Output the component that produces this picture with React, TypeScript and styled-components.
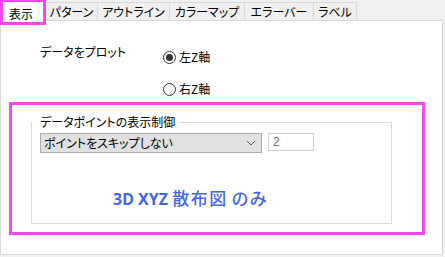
import React from "react";
import styled, { createGlobalStyle } from "styled-components";

const Global = createGlobalStyle`
  html, body { margin: 0; padding: 0; background: #f0f0f0; }
  body {
    font-family: "Noto Sans CJK JP", "Noto Sans", sans-serif;
    font-size: 12px;
    color: #000;
    font-feature-settings: "palt";
  }
`;

const MAGENTA = "#f945f2";

const Window = styled.div`
  width: 445px;
  height: 257px;
  background: #f0f0f0;
  display: flex;
  flex-direction: column;
  overflow: hidden;
`;

const TabStrip = styled.div`
  height: 20px;
  display: flex;
  align-items: flex-end;
  position: relative;
  z-index: 2;
`;

const Tab = styled.div<{ $w: number }>`
  width: ${(p) => p.$w}px;
  height: 18px;
  box-sizing: border-box;
  border: 1px solid #d9d9d9;
  border-bottom: none;
  margin-left: -1px;
  background: #f0f0f0;
  display: flex;
  align-items: center;
  justify-content: center;
  line-height: 16px;
  white-space: nowrap;
`;

const ActiveTab = styled.div<{ $w: number }>`
  width: ${(p) => p.$w}px;
  height: 26px;
  margin-bottom: -5px;
  box-sizing: border-box;
  border: 3px solid ${MAGENTA};
  background: #fff;
  display: flex;
  align-items: flex-start;
  padding: 4px 0 0 6px;
  line-height: 16px;
  position: relative;
  z-index: 3;
`;

const Panel = styled.div`
  width: 443px;
  height: 235px;
  box-sizing: border-box;
  border: 1px solid #d9d9d9;
  background: #fff;
  display: flex;
  flex-direction: column;
`;

const PlotSection = styled.div`
  display: grid;
  grid-template-columns: 123px auto;
  padding: 23px 0 0 39px;
  align-items: start;
`;

const PlotLabel = styled.div`
  line-height: 16px;
`;

const RadioColumn = styled.div`
  margin-top: 5px;
  display: flex;
  flex-direction: column;
  gap: 16px;
`;

const RadioRow = styled.label`
  display: flex;
  align-items: center;
  gap: 3px;
  height: 16px;
  line-height: 16px;
`;

const RadioCircle = styled.span<{ $on?: boolean }>`
  width: 13px;
  height: 13px;
  box-sizing: border-box;
  border-radius: 50%;
  border: 1px solid #333;
  background: #fff;
  display: flex;
  align-items: center;
  justify-content: center;
  &::after {
    content: "";
    display: ${(p) => (p.$on ? "block" : "none")};
    width: 7px;
    height: 7px;
    border-radius: 50%;
    background: #333;
  }
`;

const Highlight = styled.div`
  margin: 5px 0 0 8px;
  width: 416px;
  height: 133px;
  box-sizing: border-box;
  border: 3px solid ${MAGENTA};
  padding: 10px 0 0 19px;
`;

const Group = styled.fieldset`
  margin: 0;
  width: 361px;
  box-sizing: border-box;
  border: 1px solid #dcdcdc;
  padding: 0 8px 13px 8px;
`;

const GroupTitle = styled.legend`
  padding: 0 4px 0 7px;
  margin-left: -7px;
  line-height: 14px;
`;

const ControlRow = styled.div`
  display: flex;
  align-items: flex-start;
  gap: 6px;
  margin-top: 4px;
`;

const Select = styled.div`
  width: 222px;
  height: 20px;
  box-sizing: border-box;
  border: 1px solid #adadad;
  background: #e1e1e1;
  display: flex;
  align-items: center;
  justify-content: space-between;
  padding: 0 5px 0 3px;
  line-height: 16px;
`;

const NumberBox = styled.div`
  width: 46px;
  height: 18px;
  box-sizing: border-box;
  border: 1px solid #cfcfcf;
  background: #fff;
  color: #6d6d6d;
  padding: 0 4px;
  line-height: 16px;
  font-family: "Liberation Sans", sans-serif;
`;

const Note = styled.div`
  margin: 34px 0 0 73px;
  color: #4565ea;
  font-weight: 700;
  font-size: 16px;
  line-height: 22px;
  font-family: "Noto Sans", "Noto Sans CJK JP", sans-serif;
  white-space: nowrap;
`;

const Kanji = styled.span`
  font-family: "Noto Sans CJK JP", sans-serif;
  font-weight: 500;
  font-size: 17px;
  letter-spacing: 1.5px;
`;

const Chevron = () => (
  <svg width="10" height="6" viewBox="0 0 10 6">
    <polyline points="1,1 5,5 9,1" fill="none" stroke="#555" strokeWidth="1" />
  </svg>
);

const tabs = [
  { label: "パターン", w: 53 },
  { label: "アウトライン", w: 73 },
  { label: "カラーマップ", w: 76 },
  { label: "エラーバー", w: 70 },
  { label: "ラベル", w: 44 },
];

export default function App() {
  return (
    <>
      <Global />
      <Window>
        <TabStrip>
          <ActiveTab $w={46}>表示</ActiveTab>
          {tabs.map((t) => (
            <Tab key={t.label} $w={t.w}>
              {t.label}
            </Tab>
          ))}
        </TabStrip>
        <Panel>
          <PlotSection>
            <PlotLabel>データをプロット</PlotLabel>
            <RadioColumn>
              <RadioRow>
                <RadioCircle $on />
                左Z軸
              </RadioRow>
              <RadioRow>
                <RadioCircle />
                右Z軸
              </RadioRow>
            </RadioColumn>
          </PlotSection>
          <Highlight>
            <Group>
              <GroupTitle>データポイントの表示制御</GroupTitle>
              <ControlRow>
                <Select>
                  <span>ポイントをスキップしない</span>
                  <Chevron />
                </Select>
                <NumberBox>2</NumberBox>
              </ControlRow>
              <Note>
                3D XYZ <Kanji>散布図</Kanji> <Kanji>のみ</Kanji>
              </Note>
            </Group>
          </Highlight>
        </Panel>
      </Window>
    </>
  );
}
